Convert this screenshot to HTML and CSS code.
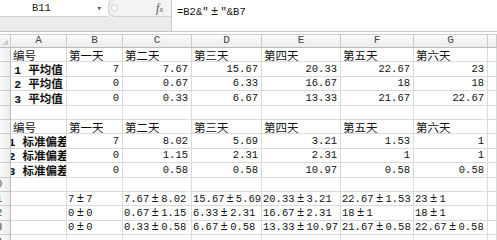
FILE: index.html
```html
<!DOCTYPE html>
<html lang="zh-CN">
<head>
<meta charset="utf-8">
<title>Sheet</title>
<link rel="stylesheet" href="styles.css">
</head>
<body>
<div class="app">
  <div class="fbar">
    <div class="fleft">
      <div class="nrow">
        <div class="namebox"><span class="ref">B11</span><span class="dd">▾</span></div>
        <div class="pill"><span class="dot"></span><span class="fx"><i>f</i><span>x</span></span></div>
      </div>
    </div>
    <div class="finput">=B2&amp;"<span class="pm">±</span>"&amp;B7</div>
  </div>
  <div class="grid">
    <div class="corner"><span class="tri"></span></div>
    <div class="ch">A</div><div class="ch">B</div><div class="ch">C</div><div class="ch">D</div><div class="ch">E</div><div class="ch">F</div><div class="ch">G</div><div class="ch"></div>

    <div class="rh"><span>1</span></div>
    <div class="t">编号</div><div class="t">第一天</div><div class="t">第二天</div><div class="t">第三天</div><div class="t">第四天</div><div class="t">第五天</div><div class="t">第六天</div><div></div>

    <div class="rh"><span>2</span></div>
    <div class="a"><span>1 平均值</span></div><div class="n">7</div><div class="n">7.67</div><div class="n">15.67</div><div class="n">20.33</div><div class="n">22.67</div><div class="n">23</div><div></div>

    <div class="rh"><span>3</span></div>
    <div class="a"><span>2 平均值</span></div><div class="n">0</div><div class="n">0.67</div><div class="n">6.33</div><div class="n">16.67</div><div class="n">18</div><div class="n">18</div><div></div>

    <div class="rh"><span>4</span></div>
    <div class="a"><span>3 平均值</span></div><div class="n">0</div><div class="n">0.33</div><div class="n">6.67</div><div class="n">13.33</div><div class="n">21.67</div><div class="n">22.67</div><div></div>

    <div class="rh"><span>5</span></div>
    <div></div><div></div><div></div><div></div><div></div><div></div><div></div><div></div>

    <div class="rh"><span>6</span></div>
    <div class="t">编号</div><div class="t">第一天</div><div class="t">第二天</div><div class="t">第三天</div><div class="t">第四天</div><div class="t">第五天</div><div class="t">第六天</div><div></div>

    <div class="rh"><span>7</span></div>
    <div class="a"><span>1 标准偏差</span></div><div class="n">7</div><div class="n">8.02</div><div class="n">5.69</div><div class="n">3.21</div><div class="n">1.53</div><div class="n">1</div><div></div>

    <div class="rh"><span>8</span></div>
    <div class="a"><span>2 标准偏差</span></div><div class="n">0</div><div class="n">1.15</div><div class="n">2.31</div><div class="n">2.31</div><div class="n">1</div><div class="n">1</div><div></div>

    <div class="rh"><span>9</span></div>
    <div class="a"><span>3 标准偏差</span></div><div class="n">0</div><div class="n">0.58</div><div class="n">0.58</div><div class="n">10.97</div><div class="n">0.58</div><div class="n">0.58</div><div></div>

    <div class="rh"><span>10</span></div>
    <div></div><div></div><div></div><div></div><div></div><div></div><div></div><div></div>

    <div class="rh"><span>11</span></div>
    <div></div><div class="x">7<span class="pm">±</span>7</div><div class="x">7.67<span class="pm">±</span>8.02</div><div class="x">15.67<span class="pm">±</span>5.69</div><div class="x">20.33<span class="pm">±</span>3.21</div><div class="x">22.67<span class="pm">±</span>1.53</div><div class="x">23<span class="pm">±</span>1</div><div></div>

    <div class="rh"><span>12</span></div>
    <div></div><div class="x">0<span class="pm">±</span>0</div><div class="x">0.67<span class="pm">±</span>1.15</div><div class="x">6.33<span class="pm">±</span>2.31</div><div class="x">16.67<span class="pm">±</span>2.31</div><div class="x">18<span class="pm">±</span>1</div><div class="x">18<span class="pm">±</span>1</div><div></div>

    <div class="rh"><span>13</span></div>
    <div></div><div class="x">0<span class="pm">±</span>0</div><div class="x">0.33<span class="pm">±</span>0.58</div><div class="x">6.67<span class="pm">±</span>0.58</div><div class="x">13.33<span class="pm">±</span>10.97</div><div class="x">21.67<span class="pm">±</span>0.58</div><div class="x">22.67<span class="pm">±</span>0.58</div><div></div>

    <div class="rh"><span>14</span></div>
    <div></div><div></div><div></div><div></div><div></div><div></div><div></div><div></div>
  </div>
</div>
</body>
</html>
```

FILE: styles.css
```css
* { box-sizing: border-box; margin: 0; padding: 0; }
html, body { width: 497px; height: 240px; overflow: hidden; background: #fff; }
body {
  font-family: "Liberation Mono", "Noto Sans CJK SC", monospace;
  color: #111;
}
.app { width: 497px; height: 240px; overflow: hidden; }

/* formula bar */
.fbar {
  display: flex;
  height: 32px;
  background: #ebebeb;
  border-bottom: 1px solid #c6c6c6;
  margin-bottom: 2px;
}
.fleft { width: 171px; }
.nrow { display: flex; height: 17px; }
.namebox {
  width: 108px;
  background: #fff;
  border-bottom: 1px solid #d2d2d2;
  display: flex;
  align-items: center;
  font-size: 10.5px;
  color: #222;
}
.ref { flex: 1; padding-left: 32px; }
.dd { font-size: 9px; color: #555; margin-right: 6px; }
.pill {
  flex: 1;
  display: flex;
  align-items: center;
  background: #f3f3f3;
  border-left: 1px solid #cfcfcf;
  border-bottom: 1px solid #d2d2d2;
  border-radius: 8px 0 0 8px;
  padding-left: 2px;
}
.dot {
  width: 7px;
  height: 8px;
  border: 1px solid #cdcdcd;
  border-radius: 4px;
  background: #f7f7f7;
}
.fx {
  margin-left: auto;
  margin-right: 8px;
  display: flex;
  align-items: baseline;
  font-family: "Liberation Serif", serif;
  color: #555;
}
.fx i { font-size: 12px; }
.fx span { font-size: 8px; font-style: italic; }
.finput {
  flex: 1;
  background: #fff;
  border-left: 1px solid #c8c8c8;
  padding: 5px 0 0 5px;
  font-size: 10.5px;
  color: #111;
}
.pm {
  display: inline-block;
  width: 12px;
  text-align: center;
  font-size: 12px;
}

/* grid */
.grid {
  display: grid;
  grid-template-columns: 11px 56px 56px 69px 70px 79px 73px 74px 1fr;
  grid-template-rows: 14px repeat(14, 14.4px);
}
.grid > div {
  border-right: 1px solid #dadada;
  border-bottom: 1px solid #dadada;
  display: flex;
  align-items: center;
  overflow: hidden;
  white-space: nowrap;
  font-size: 10.5px;
}
.grid > .ch, .grid > .corner {
  justify-content: center;
  align-items: flex-end;
  padding-bottom: 1px;
  background: linear-gradient(#fbfbfb, #ececec);
  border-right-color: #cacaca;
  border-bottom-color: #b9b9b9;
  border-top: 1px solid #d0d0d0;
  font-size: 11px;
  color: #444;
}
.corner { position: relative; }
.tri {
  position: absolute;
  right: 2px;
  bottom: 2px;
  width: 0;
  height: 0;
  border-left: 6px solid transparent;
  border-bottom: 6px solid #cfcfcf;
}
.grid > .rh {
  justify-content: flex-end;
  background: linear-gradient(90deg, #f9f9f9, #ededed);
  border-right-color: #bdbdbd;
  border-bottom-color: #cacaca;
  color: #444;
}
.rh span { flex: none; width: 28px; text-align: center; }
.grid > .t { font-size: 11.5px; padding-left: 2px; }
.grid > .a { justify-content: center; font-size: 11.5px; font-weight: bold; }
.a span { flex: none; }
.grid > .n { justify-content: flex-end; padding-right: 3px; }
.grid > .x { padding-left: 1px; }
.x .pm { font-size: 12px; }
```
